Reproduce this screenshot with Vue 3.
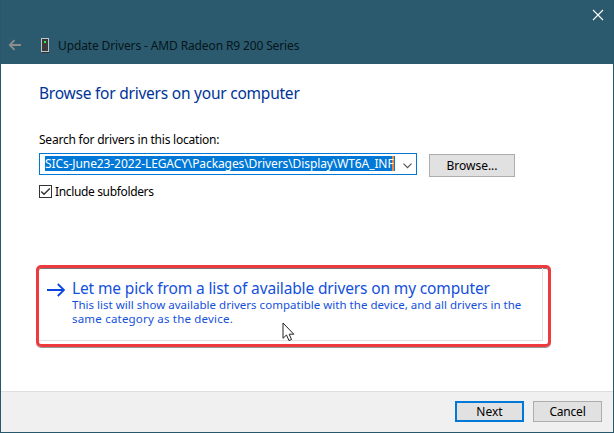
<script setup>
import { ref } from 'vue'

const path = ref('SICs-June23-2022-LEGACY\\Packages\\Drivers\\Display\\WT6A_INF')
const includeSubfolders = ref(true)
</script>

<template>
  <div class="window">
    <header class="header">
      <div class="caption">
        <svg class="close" width="12" height="12" viewBox="0 0 12 12"><path d="M1 1L11 11M11 1L1 11" /></svg>
      </div>
      <div class="title-row">
        <svg class="back" width="13" height="12" viewBox="0 0 13 12"><path d="M13 6H2M6.5 1.2L1.8 6L6.5 10.8" /></svg>
        <svg class="device" width="9" height="16" viewBox="0 0 9 16">
          <rect x="1" y="13" width="7" height="2" fill="#372f2f" />
          <rect x=".5" y=".5" width="7" height="13" fill="#3b3b3b" stroke="#bfc5c8" />
          <rect x="3" y="3" width="2" height="2" fill="#32f03c" />
        </svg>
        <span class="title">Update Drivers - AMD Radeon R9 200 Series</span>
      </div>
    </header>

    <main class="body">
      <h1 class="heading">Browse for drivers on your computer</h1>
      <label class="label">Search for drivers in this location:</label>
      <div class="location">
        <div class="combo">
          <span class="selection">{{ path }}</span>
          <svg width="9" height="6" viewBox="0 0 9 6"><path d="M.5 .7L4.5 4.7L8.5 .7" /></svg>
        </div>
        <button class="button browse">Browse...</button>
      </div>
      <div class="check" @click="includeSubfolders = !includeSubfolders">
        <span class="box">
          <svg v-if="includeSubfolders" width="11" height="11" viewBox="0 0 11 11"><path d="M1.2 5.5L4 8.3L9.8 2.5" /></svg>
        </span>
        <span class="check-text">Include subfolders</span>
      </div>

      <section class="highlight">
        <div class="command">
          <svg class="arrow" width="18" height="14" viewBox="0 0 18 14"><path d="M0 7H17M10.8 1L17 7L10.8 13" /></svg>
          <div class="command-text">
            <div class="command-title">Let me pick from a list of available drivers on my computer</div>
            <div class="command-note">This list will show available drivers compatible with the device, and all drivers in the</div>
            <div class="command-note last">same category as the device.</div>
          </div>
        </div>
        <svg class="cursor" width="13" height="20" viewBox="0 0 13 20"><path d="M1 1V16.3L4.5 13L7 18.6L9.5 17.5L7.2 12.2H11.8Z" /></svg>
      </section>
    </main>

    <footer class="footer">
      <button class="button next">Next</button>
      <button class="button cancel">Cancel</button>
    </footer>
  </div>
</template>

<style>
body { margin: 0; }
</style>

<style scoped>
* { box-sizing: border-box; }
.window {
  width: 614px; height: 433px; display: flex; flex-direction: column;
  border: 1px solid #28566b; border-top: 0; background: #fff;
  font-family: "Noto Sans", "DejaVu Sans", sans-serif; font-size: 12px; color: #000;
  white-space: nowrap; overflow: hidden;
}
svg { display: block; flex: none; fill: none; }
.header { height: 64px; flex: none; background: #2b5a6e; }
.caption { height: 30px; display: flex; justify-content: flex-end; padding: 9px 9px 0 0; }
.close { stroke: #fff; stroke-width: 1.1; }
.title-row { height: 30px; display: flex; align-items: center; padding-left: 7px; }
.back { stroke: #8d8d8d; stroke-width: 1.8; }
.device { margin: 2px 0 0 20px; }
.title { margin-left: 8px; font-size: 12px; letter-spacing: -.13px; color: #06151b; }
.body { flex: 1; padding: 18px 0 0 38px; }
.heading { margin: 0; height: 22px; line-height: 22px; font-size: 15.5px; letter-spacing: -.23px; font-weight: 400; color: #003399; }
.label { display: block; margin-top: 27px; height: 18px; line-height: 18px; font-size: 12px; letter-spacing: -.22px; }
.location { display: flex; gap: 12px; margin-top: 4px; align-items: flex-start; }
.combo {
  width: 378px; height: 22px; border: 1px solid #0078d7; display: flex; align-items: flex-start;
  justify-content: space-between; padding: 2px 4px 0 5px;
}
.combo svg { margin-top: 7px; stroke: #555; stroke-width: 1.2; }
.selection {
  width: 350px; height: 15px; background: #0078d7; color: #fff; line-height: 15px;
  overflow: hidden; border-right: 1px solid #0078d7; font-size: 12px; letter-spacing: -.1px;
  box-shadow: inset -2px 0 #f0883c;
}
.button {
  width: 69px; height: 21px; padding: 0; display: flex; align-items: center; justify-content: center;
  border: 1px solid #adadad; background: #e1e1e1; font: 12px "Noto Sans", sans-serif; color: #000;
}
.browse { width: 86px; height: 23px; margin-top: 1px; }
.next { border: 2px solid #0078d7; }
.cancel { letter-spacing: -.2px; }
.check { display: flex; align-items: center; height: 17px; margin-top: 6px; }
.box { width: 13px; height: 13px; border: 1px solid #333; }
.box svg { stroke: #333; stroke-width: 1.4; }
.check-text { margin-left: 3px; font-size: 12px; letter-spacing: -.35px; }
.highlight {
  position: relative; width: 515px; height: 82px; margin: 65px 0 0 -3px; padding: 0 5px 2px 0;
  border: 3px solid #ee3a3e; border-radius: 5px; box-shadow: inset 0 1px #777, 0 1px #999;
}
.command {
  height: 73px; display: flex; padding: 11px 0 0 8px;
  border: solid #e2e2e2; border-width: 0 1px 1px 0;
}
.arrow { margin-top: 4px; stroke: #0a46e0; stroke-width: 1.8; }
.command-text { margin-left: 7px; color: #1450dc; }
.command-title { height: 19px; line-height: 18px; font-size: 15.5px; letter-spacing: -.14px; }
.command-note { height: 14px; line-height: 14px; font-size: 11.5px; letter-spacing: .02px; }
.last { letter-spacing: .2px; }
.cursor { position: absolute; left: 243px; top: 54px; fill: #fff; stroke: #222; stroke-width: 1; }
.footer {
  height: 41px; flex: none; display: flex; gap: 9px; justify-content: flex-end; padding: 9px 11px 0 0;
  border-top: 1px solid #dfdfdf; background: #f0f0f0;
}
</style>
